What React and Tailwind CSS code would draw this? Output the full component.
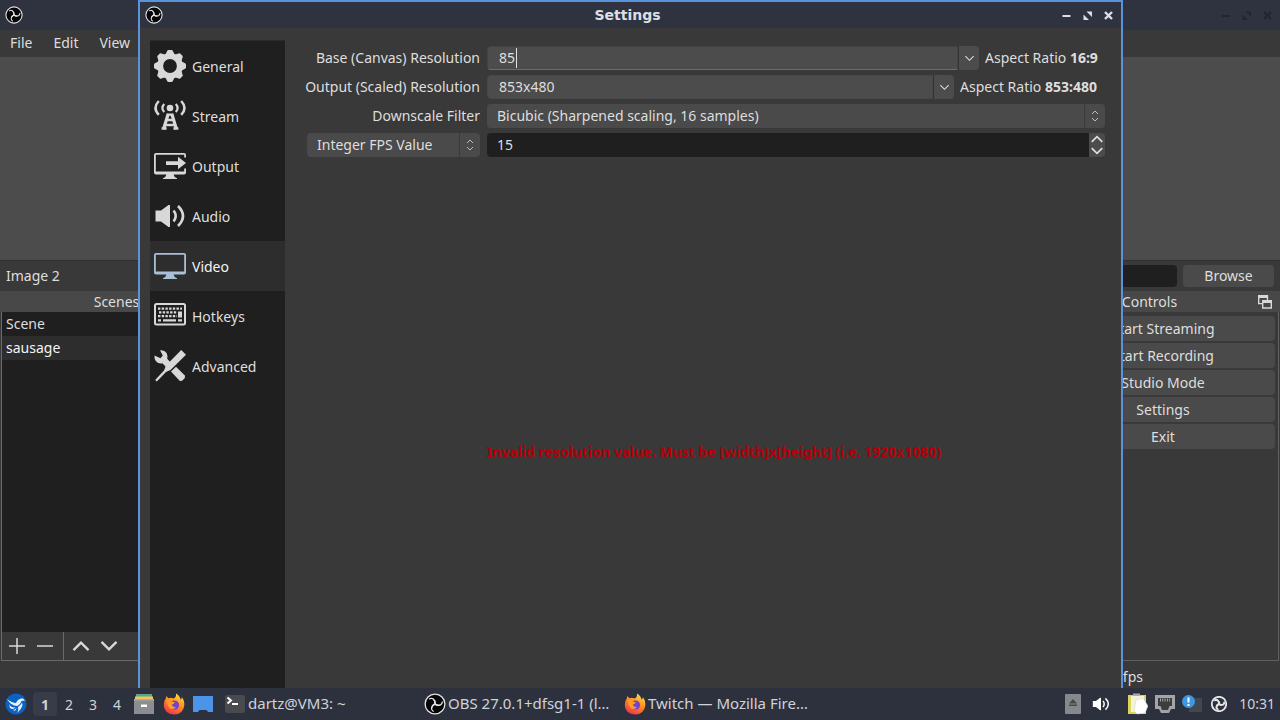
import React from 'react';

function ObsLogo({ className, arm = 1.3, tray = false }) {
  return (
    <svg viewBox="0 0 22 22" className={`shrink-0 ${className}`} aria-hidden="true">
      <circle cx="11" cy="11" r="9.900" fill={tray ? 'none' : '#050505'} stroke="#e6e6e6" strokeWidth={tray ? 2.4 : 1.3} />
      {[0, 120, 240].map((a) => (
        <g key={a} transform={`rotate(${a} 11 11)`}>
          <path d="M11 11 Q11.600 7.600 9 5.800 Q7.200 4.800 5.600 5.800" fill="none" stroke="#e6e6e6" strokeWidth={arm} strokeLinecap="round" />
          <path d="M10.300 10.800 Q10.600 8 8.600 6 L11.200 7.500 L12 10.500 Z" fill="#e6e6e6" />
        </g>
      ))}
    </svg>
  );
}

function Gear() {
  const teeth = [0, 45, 90, 135, 180, 225, 270, 315];
  return (
    <svg viewBox="0 0 32 32" className="h-8 w-8" aria-hidden="true">
      <circle cx="16" cy="16" r="9.800" fill="none" stroke="currentColor" strokeWidth="5.800" />
      {teeth.map((a) => (
        <path key={a} d="M10.800 5.500 L13.200 1 Q13.500 0 14.400 0 H17.600 Q18.500 0 18.800 1 L21.200 5.500 Z" fill="currentColor" transform={`rotate(${a} 16 16)`} />
      ))}
    </svg>
  );
}

function Antenna() {
  return (
    <svg viewBox="0 0 32 32" className="h-8 w-8" fill="none" stroke="currentColor" aria-hidden="true">
      <circle cx="16" cy="8" r="3.300" fill="currentColor" stroke="none" />
      <path d="M10.200 4 Q6.600 8 10.200 12 M21.800 4 Q25.400 8 21.800 12" strokeWidth="2.200" />
      <path d="M4.800 1 Q-1.800 8 4.800 14.800 M27.200 1 Q33.800 8 27.200 14.800" strokeWidth="2.500" />
      <path d="M14.200 14 L9.600 29 M17.800 14 L22.400 29" strokeWidth="3.200" />
      <path d="M12.800 14.600 H19.200 M12 20 H20 M10.500 25 H21.500" strokeWidth="2.400" />
      <path d="M7.600 28.500 H12.600 M19.400 28.500 H24.400" strokeWidth="2.400" />
    </svg>
  );
}

function Monitor() {
  return (
    <svg viewBox="0 0 32 32" className="h-8 w-8" aria-hidden="true">
      <path fill="currentColor" fillRule="evenodd" d="M2 3 H30 Q32 3 32 5 V22.500 Q32 24.500 30 24.500 H19.600 Q20 27.400 23 28.200 V29 H9 V28.200 Q12 27.400 12.400 24.500 H2 Q0 24.500 0 22.500 V5 Q0 3 2 3 Z M1.800 4.800 V21.500 H30.200 V4.800 Z" />
    </svg>
  );
}

function OutputIcon() {
  return (
    <svg viewBox="0 0 32 32" className="h-8 w-8" fill="currentColor" aria-hidden="true">
      <path d="M2 3 H30 Q32 3 32 5 V7.500 H30.200 V4.800 H1.800 V21.500 H30.200 V18.500 H32 V22.500 Q32 24.500 30 24.500 H19.600 Q20 27.400 23 28.200 V29 H9 V28.200 Q12 27.400 12.400 24.500 H2 Q0 24.500 0 22.500 V5 Q0 3 2 3 Z" />
      <path d="M12 11.200 H24 V6.800 L32 13 L24 19.200 V15 H12 Z" />
    </svg>
  );
}

function Speaker({ className = 'h-8 w-8' }) {
  return (
    <svg viewBox="0 0 32 32" className={className} aria-hidden="true">
      <path d="M1.500 10.500 H7 L14.500 5 H16 V27 H14.500 L7 21.500 H1.500 Z" fill="currentColor" />
      <path d="M19.600 10.500 Q23.800 16 19.600 21.500" fill="none" stroke="currentColor" strokeWidth="2.600" />
      <path d="M24 6 Q34 16 24 26" fill="none" stroke="currentColor" strokeWidth="2.600" />
    </svg>
  );
}

function Keyboard() {
  return (
    <svg viewBox="0 0 32 32" className="h-8 w-8" aria-hidden="true">
      <rect x="1" y="4" width="30" height="20.500" rx="1.500" fill="none" stroke="currentColor" strokeWidth="2" />
      <path d="M4 8.600 H28 M5 12.400 H23 M4 16.200 H23" fill="none" stroke="currentColor" strokeWidth="2.300" strokeDasharray="2.400 1.300" />
      <path d="M24 11.400 H28 V17.600 H24 Z M4 19.200 H7 V21.400 H4 Z M9 19.200 H22 V21.400 H9 Z M24 19.200 H28 V21.400 H24 Z" fill="currentColor" />
    </svg>
  );
}

function Tools() {
  return (
    <svg viewBox="0 0 32 32" className="h-8 w-8" fill="currentColor" aria-hidden="true">
      <path d="M0.500 5.500 L6.500 8.200 L8.800 5.500 L6 0.300 Q10.500 0 12.800 3.600 Q14 6 13.200 8.800 L16.600 12.400 L12 17 L8.400 13.200 Q4.600 14 2 11.200 Q0 9 0.500 5.500 Z" />
      <path d="M22 16.800 L30.600 25.200 Q31.800 27 30.400 28.600 L28.400 30.600 Q26.800 31.600 25.400 30.400 L17 21.600 Z" />
      <path d="M27.200 0 L32 4.800 L16.500 20 L12 22 L2.800 31.600 L1.200 30 L10 20.500 L12 15.600 Z" />
    </svg>
  );
}

function Chevron({ up, className = 'h-3 w-3', width = 1.5 }) {
  return (
    <svg viewBox="0 0 12 12" className={className} fill="none" stroke="currentColor" strokeWidth={width} aria-hidden="true">
      <path d={up ? 'M1.500 8.500 L6 4 L10.500 8.500' : 'M1.500 3.500 L6 8 L10.500 3.500'} />
    </svg>
  );
}

function UpDown() {
  return (
    <svg viewBox="0 0 10 14" className="h-[14px] w-[10px]" fill="none" stroke="#bdbdbd" aria-hidden="true">
      <path d="M2 5 L5 2 L8 5 M2 9 L5 12 L8 9" />
    </svg>
  );
}

function WindowButtons({ className }) {
  return (
    <div className={`flex items-center gap-2 ${className}`}>
      <button aria-label="Minimize" className="h-[13px] w-[13px]">
        <svg viewBox="0 0 13 13" className="h-[13px] w-[13px]"><path d="M2.500 6 H10.500 V8 H2.500 Z" fill="currentColor" /></svg>
      </button>
      <button aria-label="Maximize" className="h-[13px] w-[13px]">
        <svg viewBox="0 0 13 13" className="h-[13px] w-[13px]" fill="currentColor"><path d="M5.500 2.500 H11 V8 Z M2.500 5.500 L8 11 H2.500 Z" /></svg>
      </button>
      <button aria-label="Close" className="h-[13px] w-[13px]">
        <svg viewBox="0 0 13 13" className="h-[13px] w-[13px]" fill="none" stroke="currentColor" strokeWidth="2.400"><path d="M3 3 L10 10 M10 3 L3 10" /></svg>
      </button>
    </div>
  );
}

const pages = [
  ['General', Gear],
  ['Stream', Antenna],
  ['Output', OutputIcon],
  ['Audio', Speaker],
  ['Video', Monitor],
  ['Hotkeys', Keyboard],
  ['Advanced', Tools],
];

function Combo({ id, label, value, ratio, focused }) {
  return (
    <>
      <label htmlFor={id} className="text-right">{label}</label>
      <div className="flex h-6 items-center">
        <div className={`flex h-6 min-w-0 flex-1 items-center rounded-l-sm border bg-[#4c4c4c] pl-[11px] ${focused ? 'border-[#434343] border-b-[#6c6c6c]' : 'border-[#484848]'}`}>
          <input
            id={id}
            defaultValue={value}
            className={`bg-transparent outline-none ${focused ? 'w-[18px] border-r border-[#e0e0e0]' : 'w-full'}`}
          />
        </div>
        <button type="button" aria-label={`${label} options`} className="flex h-6 w-[21px] items-center justify-center rounded-r-sm border-l border-[#333] bg-[#4c4c4c]">
          <Chevron className="h-[11px] w-[11px]" width={1.2} />
        </button>
        <span className={`ml-[6px] whitespace-nowrap ${focused ? 'w-[120px]' : 'w-[145px]'}`}>Aspect Ratio <b>{ratio}</b></span>
      </div>
    </>
  );
}

function SelectBox({ id, label, options, className = '' }) {
  return (
    <div className={`flex h-6 rounded-sm bg-[#4a4a4a] ${className}`}>
      <select id={id} aria-label={label} className="min-w-0 flex-1 appearance-none bg-transparent pl-[10px] outline-none">
        {options.map((o) => <option key={o}>{o}</option>)}
      </select>
      <span className="flex w-[21px] items-center justify-center border-l border-[#3a3a3a]"><UpDown /></span>
    </div>
  );
}

function SettingsDialog() {
  return (
    <section aria-label="Settings" className="absolute bottom-0 left-[138px] right-[157px] top-0 flex flex-col border-2 border-b-0 border-[#5a93dc] bg-[#393939]">
      <header className="flex h-[26px] shrink-0 items-center bg-[#2f3340] px-[5px] text-[#dcdfe6]">
        <ObsLogo className="h-[18px] w-[18px]" />
        <h1 className="flex-1 pl-8 text-center font-['DejaVu_Sans',sans-serif] text-[14px] font-bold">Settings</h1>
        <WindowButtons className="pr-px" />
      </header>
      <div className="flex min-h-0 flex-1 pl-[10px] pt-3">
        <nav className="w-[135px] shrink-0 border-t border-[#2a2a2a] bg-[#1f1f1f]">
          {pages.map(([name, Icon]) => (
            <button
              key={name}
              aria-current={name === 'Video' ? 'page' : undefined}
              className={`flex h-[50px] w-full items-center gap-[6px] pl-1 ${name === 'Video' ? 'bg-[#2d2d2d] text-[#f4f4f4]' : ''}`}
            >
              <span className={name === 'Video' ? 'text-[#a9bfd6]' : 'text-[#d8d8d8]'}><Icon /></span>
              <span className="pt-[2px]">{name}</span>
            </button>
          ))}
        </nav>
        <form className="min-w-0 flex-1 pl-2 pr-4 pt-[6px]" onSubmit={(e) => e.preventDefault()}>
          <div className="grid grid-cols-[187px_minmax(0,1fr)] items-center gap-x-[7px] gap-y-[5px]">
            <Combo id="base" label="Base (Canvas) Resolution" value="85" ratio="16:9" focused />
            <Combo id="output" label="Output (Scaled) Resolution" value="853x480" ratio="853:480" />
            <label htmlFor="filter" className="text-right">Downscale Filter</label>
            <SelectBox id="filter" options={['Bicubic (Sharpened scaling, 16 samples)']} />
            <SelectBox id="fpsType" label="FPS type" options={['Integer FPS Value']} className="ml-[14px]" />
            <div className="flex h-6">
              <input aria-label="Integer FPS Value" defaultValue="15" className="min-w-0 flex-1 rounded-l-sm bg-[#1f1f1f] pl-[10px] outline-none" />
              <div className="flex w-4 flex-col rounded-r-sm bg-[#4c4c4c]">
                <button type="button" aria-label="Increase" className="flex h-3 items-center justify-center"><Chevron up className="h-[14px] w-[14px]" /></button>
                <button type="button" aria-label="Decrease" className="flex h-3 items-center justify-center"><Chevron className="h-[14px] w-[14px]" /></button>
              </div>
            </div>
          </div>
          <p role="alert" className="mt-[285px] pl-[194px] leading-5 font-bold whitespace-nowrap text-[#b30008]">
            Invalid resolution value. Must be [width]x[height] (i.e. 1920x1080)
          </p>
        </form>
      </div>
    </section>
  );
}

function MainWindow() {
  return (
    <main className="flex h-full flex-col bg-[#393939]">
      <header className="flex h-[30px] shrink-0 items-center justify-between bg-[#2f3340] pl-[5px] pr-[6px]">
        <ObsLogo className="h-[18px] w-[18px]" />
        <WindowButtons className="text-[#222632]" />
      </header>
      <nav className="flex h-[27px] shrink-0 items-start gap-[21px] pl-[10px] pt-[3px]">
        <button>File</button>
        <button>Edit</button>
        <button>View</button>
      </nav>
      <div className="min-h-0 flex-1 bg-[#4c4c4c]" />
      <div className="flex h-[31px] shrink-0 items-center justify-between border-t border-[#303030] pl-[6px] pr-[6px]">
        <span>Image 2</span>
        <div className="flex gap-[6px]">
          <input aria-label="Image file" readOnly className="h-[22px] w-40 rounded-sm bg-[#1f1f1f]" />
          <button className="h-[22px] w-[91px] rounded-sm bg-[#4a4a4a]">Browse</button>
        </div>
      </div>
      <div className="flex h-[370px] shrink-0 justify-between">
        <section className="flex w-[233px] flex-col">
          <h2 className="flex h-[21px] items-center justify-center bg-[#484848]">Scenes</h2>
          <div className="ml-px flex flex-1 flex-col border border-[#6a6a6a] border-t-0">
            <ul className="flex-1 bg-[#1f1f1f]">
              <li className="flex h-6 items-center pl-1">Scene</li>
              <li className="flex h-6 items-center bg-[#2d2d2d] pl-1 text-[#f4f4f4]">sausage</li>
            </ul>
            <div className="flex h-7 items-center text-[#d8d8d8]">
              <div className="flex h-7 items-center gap-3 border-r border-[#6a6a6a] pl-[7px] pr-[10px]">
                <button aria-label="Add scene"><svg viewBox="0 0 16 16" className="h-4 w-4" stroke="currentColor" strokeWidth="1.500"><path d="M0 8 H16 M8 0 V16" /></svg></button>
                <button aria-label="Remove scene"><svg viewBox="0 0 16 16" className="h-4 w-4" stroke="currentColor" strokeWidth="1.500"><path d="M0 8 H16" /></svg></button>
              </div>
              <div className="flex items-center gap-2 pl-[7px]">
                <button aria-label="Move scene up"><Chevron up className="h-5 w-5" width={1.4} /></button>
                <button aria-label="Move scene down"><Chevron className="h-5 w-5" width={1.4} /></button>
              </div>
            </div>
          </div>
        </section>
        <section className="flex w-[229px] flex-col">
          <div className="flex h-[21px] items-center bg-[#484848] pr-2">
            <h2 className="flex-1 pr-[10px] text-center">Controls</h2>
            <button aria-label="Undock" className="text-[#d8d8d8]">
              <svg viewBox="0 0 14 14" className="h-[14px] w-[14px]" fill="none" stroke="currentColor" strokeWidth="1.400">
                <path d="M4.500 8.600 H0.700 V1 H9.500 V5" /><path d="M4.700 6 H13.300 V13 H4.700 Z" /><path d="M0 1.500 H10 M4 6.500 H14" strokeWidth="3" />
              </svg>
            </button>
          </div>
          <div className="mr-px flex flex-1 flex-col gap-[2px] border-b border-r border-[#606060] pr-[3px] pt-1">
            {['Start Streaming', 'Start Recording', 'Studio Mode', 'Settings', 'Exit'].map((t) => (
              <button key={t} className="h-[25px] rounded-sm bg-[#4a4a4a]">{t}</button>
            ))}
          </div>
        </section>
      </div>
      <footer className="flex h-[27px] shrink-0 items-center justify-end pr-[137px] pt-1">15.00 fps</footer>
    </main>
  );
}

function Firefox() {
  return (
    <svg viewBox="0 0 22 22" className="h-[22px] w-[22px] shrink-0" aria-hidden="true">
      <defs>
        <linearGradient id="flame" x1="0.8" y1="0" x2="0.3" y2="1">
          <stop offset="0" stopColor="#ffe14a" /><stop offset="0.5" stopColor="#ff8a1f" /><stop offset="1" stopColor="#f0334f" />
        </linearGradient>
      </defs>
      <path fill="url(#flame)" d="M13 0.500 Q17 3 17.500 6.500 Q19 6 18.800 4 Q21.800 8 21.300 12.500 Q20 21.500 11 21.500 Q1.500 21 0.800 12.500 Q0.500 8 3 5 L3.200 3 L5.500 5.200 Q8 4.300 10.500 5.600 Q13.500 4.300 13 0.500 Z" />
      <circle cx="11.500" cy="12" r="4.600" fill="#7542c8" />
      <path fill="#ff9d25" d="M4 7 Q7.500 5.500 9 8.500 L12 9.500 Q11 11 8.800 11.500 Q9.500 14.500 13 14 Q10 17.500 6.500 15 Q4 12 4 7 Z" />
    </svg>
  );
}

function Taskbar() {
  return (
    <footer className="flex h-8 shrink-0 items-center bg-[#2d313d] pl-[5px] pr-[5px] text-[15px] text-[#cfd3dc]">
      <button aria-label="Application menu" className="h-[22px] w-[22px]">
        <svg viewBox="0 0 22 22" className="h-[22px] w-[22px]">
          <circle cx="11" cy="11" r="10.500" fill="#0a62c4" />
          <path d="M2 6 Q7 10 11 10 Q13 5 18 5.500 L20 7.500 L16.500 8 Q15 12 12 13 Q6 13 2 6 Z M4 11 Q6 15 10.500 14.500 Q8 17 5 15 Z M13 14 Q16 12 17 9.500 Q19 14 12 20 Q14 17 13 14 Z M8 17 Q10 17 11.500 15 Q11 19 8 17 Z" fill="#e6f0fb" />
        </svg>
      </button>
      <div className="ml-[6px] flex text-sm">
        {['1', '2', '3', '4'].map((n) => (
          <button key={n} className={`h-6 w-6 pt-[2px] ${n === '1' ? 'rounded-sm bg-[#383c49] font-bold' : ''}`}>{n}</button>
        ))}
      </div>
      <div className="ml-1 flex items-center gap-2">
        <button aria-label="Files" className="w-[22px]">
          <svg viewBox="0 0 22 22" className="h-[22px] w-[22px]">
            <path d="M3 1 H19 V4 H3 Z" fill="#5ba58c" /><path d="M2 3.500 H20 V7 H2 Z" fill="#eec95a" /><path d="M1 6 H21 V21 H1 Z" fill="#8b8d8f" /><path d="M1 6 H21 V7.500 H1 Z" fill="#a8aaac" /><path d="M8 11.500 H14 V14 H8 Z" fill="#fff" />
          </svg>
        </button>
        <button aria-label="Firefox"><Firefox /></button>
        <button aria-label="Show desktop" className="w-5">
          <svg viewBox="0 0 20 18" className="h-[18px] w-5"><path d="M0 1 H20 V17 H15 L13.500 15 H6.500 L5 17 H0 Z" fill="#4b94e8" /></svg>
        </button>
      </div>
      <button className="ml-3 flex w-[199px] items-center gap-[3px]">
        <svg viewBox="0 0 20 18" className="h-[18px] w-5 shrink-0">
          <rect width="20" height="18" rx="2" fill="#484a4e" /><path d="M2.500 2.500 L6 5.500 L2.500 8.500" fill="none" stroke="#fff" strokeWidth="2" /><path d="M7 8 H13 V10 H7 Z" fill="#fff" />
        </svg>
        dartz@VM3: ~
      </button>
      <button className="flex w-[200px] items-center gap-[2px] whitespace-nowrap">
        <ObsLogo className="h-[22px] w-[22px]" />
        OBS 27.0.1+dfsg1-1 (l…
      </button>
      <button className="flex items-center gap-[2px] whitespace-nowrap"><Firefox />Twitch — Mozilla Fire…</button>
      <div className="ml-auto flex items-center">
        <svg viewBox="0 0 16 20" className="h-5 w-4"><rect width="16" height="20" rx="1" fill="#86888b" /><path d="M8 5 L12 9.500 H4 Z M4 10.500 H12 V12 H4 Z" fill="#45484d" /></svg>
        <span className="ml-[11px] text-white"><Speaker className="h-[18px] w-[18px]" /></span>
        <svg viewBox="0 0 20 22" className="ml-[18px] h-[22px] w-5"><path d="M0 2 H18 V21 H0 Z" fill="#d8d45c" /><path d="M3 3 H16 V19 H3 Z" fill="#f4f3d6" /><path d="M5 0.500 H12 V3 H5 Z" fill="#aaa" /><path d="M8 7 L15 5 L20 13 L17 20 L9 21 L6 18 Z" fill="#fff" stroke="#ccc" strokeWidth="0.500" /></svg>
        <svg viewBox="0 0 20 18" className="ml-[7px] h-[18px] w-5"><path d="M0 0 H20 V14 H16 L14 18 H6 L4 14 H0 Z" fill="#a2a4a6" /><path d="M3 3 H17 V11 H14.500 L13 15 H7 L5.500 11 H3 Z" fill="#3b3d40" /><path d="M5 5 H15" stroke="#a2a4a6" strokeWidth="3" strokeDasharray="1 1.300" /></svg>
        <svg viewBox="0 0 20 18" className="ml-[7px] h-[18px] w-5"><rect x="7" y="3" width="13" height="14" fill="#42464f" /><circle cx="6.500" cy="6.500" r="6.500" fill="#3c97e4" /><path d="M5.500 2.500 H7.500 V7.500 H5.500 Z M5.500 9 H7.500 V11 H5.500 Z" fill="#fff" /></svg>
        <ObsLogo className="ml-[9px] h-4 w-4" arm={2.8} tray />
        <time className="ml-3 text-sm">10:31</time>
      </div>
    </footer>
  );
}

export default function App() {
  return (
    <div className="flex h-screen flex-col overflow-hidden font-['Noto_Sans',sans-serif] text-sm text-[#dedede]">
      <div className="relative min-h-0 flex-1">
        <MainWindow />
        <SettingsDialog />
      </div>
      <Taskbar />
    </div>
  );
}
